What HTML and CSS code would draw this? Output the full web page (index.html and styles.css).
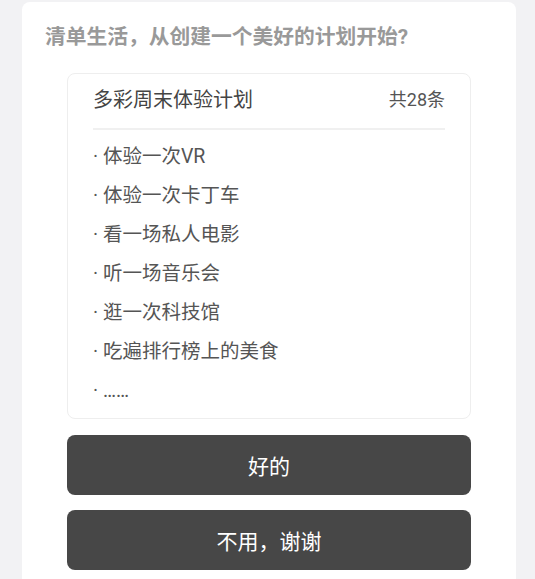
FILE: index.html
```html
<!DOCTYPE html>
<html lang="zh-CN">
  <head>
    <meta charset="UTF-8" />
    <meta name="viewport" content="width=device-width, initial-scale=1.0" />
    <title>清单生活</title>
    <link rel="stylesheet" href="styles.css">
  </head>
  <body>
    <div class="sheet">
      <h1 class="sheet-title">清单生活，从创建一个美好的计划开始?</h1>

      <div class="sheet-body">
        <div class="plan">
          <div class="plan-head">
            <span class="plan-name">多彩周末体验计划</span>
            <span class="plan-count">共28条</span>
          </div>
          <ul class="plan-list">
            <li>· 体验一次VR</li>
            <li>· 体验一次卡丁车</li>
            <li>· 看一场私人电影</li>
            <li>· 听一场音乐会</li>
            <li>· 逛一次科技馆</li>
            <li>· 吃遍排行榜上的美食</li>
            <li>· ……</li>
          </ul>
        </div>

        <button class="btn btn-ok">好的</button>
        <button class="btn">不用，谢谢</button>
      </div>
    </div>
  </body>
</html>
```

FILE: styles.css
```css
body {
  margin: 0;
  background-color: #f2f2f4;
  font-family: Roboto, "Noto Sans CJK SC", sans-serif;
  color: #444;
}
.sheet {
  width: 448px;
  margin: 2px 0 0 22px;
  padding: 20px 23px 30px;
  background-color: #fff;
  border-radius: 8px;
}
.sheet-title {
  margin: 0 0 21px;
  font-size: 20.75px;
  line-height: 30px;
  font-weight: bold;
  color: #999;
}
.sheet-body {
  padding: 0 22px;
}
.plan {
  border: 1px solid #eee;
  border-radius: 8px;
  padding: 0 25px;
}
.plan-head {
  display: flex;
  justify-content: space-between;
  align-items: center;
  padding: 10px 0 12px;
  line-height: 32px;
  border-bottom: 2px solid #f0f0f0;
}
.plan-name {
  font-size: 20px;
  color: #444;
}
.plan-count {
  font-size: 18px;
  color: #555;
}
.plan-list {
  list-style: none;
  margin: 0;
  padding: 7px 0 8px;
}
.plan-list li {
  font-size: 19.5px;
  line-height: 39px;
  color: #555;
}
.btn {
  display: block;
  width: 100%;
  height: 60px;
  margin-top: 15px;
  border: none;
  border-radius: 8px;
  background-color: #474747;
  color: #fff;
  font-family: inherit;
  font-size: 21px;
}
.btn-ok {
  margin-top: 16px;
}
```
